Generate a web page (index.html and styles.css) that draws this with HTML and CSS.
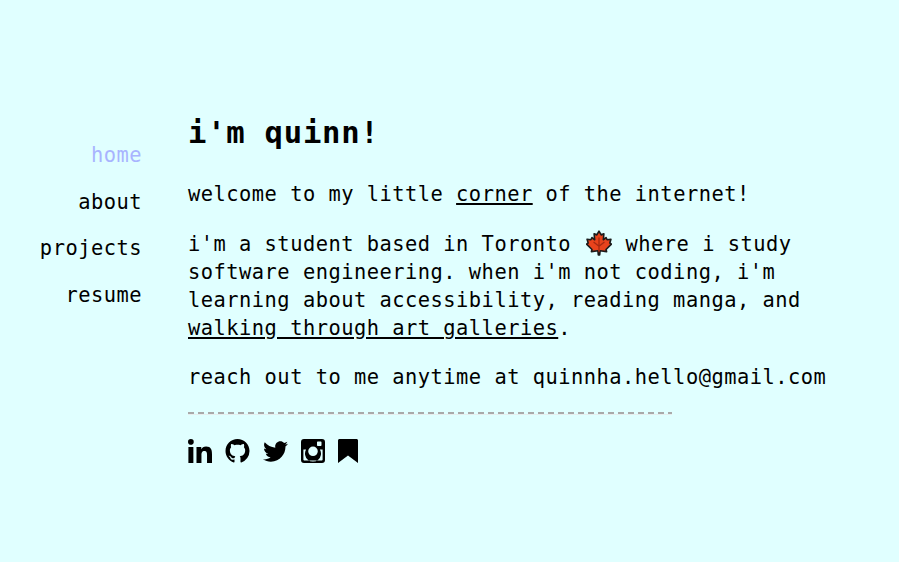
FILE: index.html
```html
<!DOCTYPE html>
<html lang="en">
<head>
    <meta charset="UTF-8">
    <meta name="viewport" content="width=device-width, initial-scale=1.0">
    <title>quinn</title>
    <link rel="stylesheet" href="styles.css">
</head>
<body>
    <div class="page">
        <nav class="nav">
            <a class="nav-link active" href="#">home</a>
            <a class="nav-link" href="#">about</a>
            <a class="nav-link" href="#">projects</a>
            <a class="nav-link" href="#">resume</a>
        </nav>
        <main class="content">
            <h1>i'm quinn!</h1>
            <p>welcome to my little <a href="#">corner</a> of the internet!</p>
            <p>i'm a student based in Toronto
                <svg class="leaf" viewBox="0 0 24 24" role="img" aria-label="maple leaf">
                    <path d="M12 1L14 4.500 16.500 3.500 16 9 18.500 7 19.500 9 23 8.500 22 12 23.500 13 18.500 18 19 20 13 19.200 12.600 23H11.400L11 19.200 5 20 5.500 18 .5 13 2 12 1 8.500 4.500 9 5.500 7 8 9 7.500 3.500 10 4.500z" fill="#e8431c" stroke="#1c1c1c" stroke-width="1.500" stroke-linejoin="round"/>
                    <path d="M12 20V7M12 15L7 11M12 15l5-4" fill="none" stroke="#a52a12" stroke-width="1.200"/>
                </svg>
                where i study<br>
                software engineering. when i'm not coding, i'm learning about accessibility, reading manga, and <a href="#">walking through art galleries</a>.</p>
            <p class="contact">reach out to me anytime at quinnha.hello@gmail.com</p>
            <hr class="divider">
            <div class="socials">
                <a href="#"><svg class="icon" width="24" height="24" viewBox="0 0 448 448"><path d="M100.280 448H7.400V148.900h92.880zM53.790 108.100C24.090 108.100 0 83.500 0 53.800a53.790 53.790 0 0 1 107.580 0c0 29.700-24.100 54.300-53.790 54.300zM447.900 448h-92.680V302.400c0-34.700-.7-79.200-48.290-79.200-48.290 0-55.690 37.700-55.690 76.700V448h-92.780V148.900h89.080v40.800h1.300c12.400-23.500 42.690-48.300 87.880-48.300 94 0 111.280 61.900 111.280 142.300V448z"/></svg></a>
                <a href="#"><svg class="icon" width="25" height="24" viewBox="0 0 16 16"><path d="M8 0C3.580 0 0 3.580 0 8c0 3.540 2.290 6.530 5.470 7.590.4.070.55-.17.55-.38 0-.19-.01-.82-.01-1.490-2.010.37-2.530-.49-2.690-.94-.09-.23-.48-.94-.82-1.130-.28-.15-.68-.52-.01-.53.630-.01 1.080.58 1.230.82.720 1.210 1.870.87 2.330.66.070-.52.280-.87.510-1.070-1.780-.2-3.640-.89-3.640-3.950 0-.87.310-1.590.82-2.150-.08-.2-.36-1.020.08-2.120 0 0 .67-.21 2.200.82.640-.18 1.320-.27 2-.27.680 0 1.360.09 2 .27 1.530-1.040 2.200-.82 2.200-.82.440 1.100.160 1.920.080 2.120.510.560.820 1.270.820 2.150 0 3.070-1.870 3.750-3.650 3.950.290.250.540.730.540 1.480 0 1.070-.01 1.930-.01 2.200 0 .210.150.460.550.380A8.013 8.013 0 0016 8c0-4.420-3.580-8-8-8z"/></svg></a>
                <a href="#"><svg class="icon" width="25" height="25" viewBox="0 0 512 512"><path d="M459.370 151.716c.325 4.548.325 9.097.325 13.645 0 138.720-105.583 298.558-298.558 298.558-59.452 0-114.680-17.219-161.137-47.106 8.447.974 16.568 1.299 25.340 1.299 49.055 0 94.213-16.568 130.274-44.832-46.132-.975-84.792-31.188-98.112-72.772 6.498.974 12.995 1.624 19.818 1.624 9.421 0 18.843-1.300 27.614-3.573-48.081-9.747-84.143-51.980-84.143-102.985v-1.299c13.969 7.797 30.214 12.670 47.431 13.319-28.264-18.843-46.781-51.005-46.781-87.391 0-19.492 5.197-37.360 14.294-52.954 51.655 63.675 129.300 105.258 216.365 109.807-1.624-7.797-2.599-15.918-2.599-24.040 0-57.828 46.782-104.934 104.934-104.934 30.213 0 57.502 12.670 76.670 33.137 23.715-4.548 46.456-13.320 66.599-25.340-7.798 24.366-24.366 44.833-46.132 57.827 21.117-2.273 41.584-8.122 60.426-16.243-14.292 20.791-32.161 39.308-52.628 54.253z"/></svg></a>
                <a href="#"><svg class="icon" width="24" height="24" viewBox="0 0 24 24"><path fill-rule="evenodd" d="M3 0h18a3 3 0 0 1 3 3v18a3 3 0 0 1-3 3H3a3 3 0 0 1-3-3V3a3 3 0 0 1 3-3zM2.400 10.500v10c0 .6.500 1.100 1.100 1.100h17c.6 0 1.100-.5 1.100-1.100v-10h-2.700a8 8 0 1 1-13.800 0zM12 7.500a4.800 4.800 0 1 0 0 9.600 4.800 4.800 0 0 0 0-9.600zM17 2.500c-.6 0-1 .4-1 1V6c0 .6.400 1 1 1h2.500c.6 0 1-.4 1-1V3.500c0-.6-.4-1-1-1z"/></svg></a>
                <a href="#"><svg class="icon" width="20" height="24" viewBox="0 0 20 24"><path d="M1.500 0h17c.8 0 1.500.7 1.500 1.500V24l-10-7.500L0 24V1.500C0 .7.700 0 1.500 0z"/></svg></a>
            </div>
        </main>
    </div>
</body>
</html>
```

FILE: styles.css
```css
body {
    margin: 0;
    background-color: #e0ffff;
    color: #000;
    font-family: "DejaVu Sans Mono", monospace;
    font-size: 20.400px;
    letter-spacing: .49px;
    line-height: 28px;
}

a {
    color: inherit;
}

.page {
    display: flex;
    gap: 46px;
    padding-top: 112px;
}

.nav {
    display: flex;
    flex-direction: column;
    align-items: flex-end;
    gap: 18.500px;
    width: 142px;
    padding-top: 29px;
}

.nav-link {
    text-decoration: none;
}

.nav-link.active {
    color: #a8b4ff;
}

.content {
    width: 660px;
}

h1 {
    margin: 0 0 26px;
    font-size: 30.600px;
    letter-spacing: .73px;
    line-height: 42px;
}

p {
    margin: 0 0 21.500px;
}

.contact {
    margin-bottom: 20.500px;
}

.leaf {
    width: 26px;
    height: 26px;
    margin: 0 1px 0 2px;
    vertical-align: -5px;
}

.divider {
    width: 484px;
    height: 2px;
    margin: 0 0 24px;
    border: none;
    border-bottom: 1px solid #e6eeee;
    background: repeating-linear-gradient(90deg, #a9a9a9 0 6px, transparent 6px 10px);
}

.socials {
    display: flex;
    align-items: center;
    gap: 13px;
}

.socials a {
    display: flex;
}
```
